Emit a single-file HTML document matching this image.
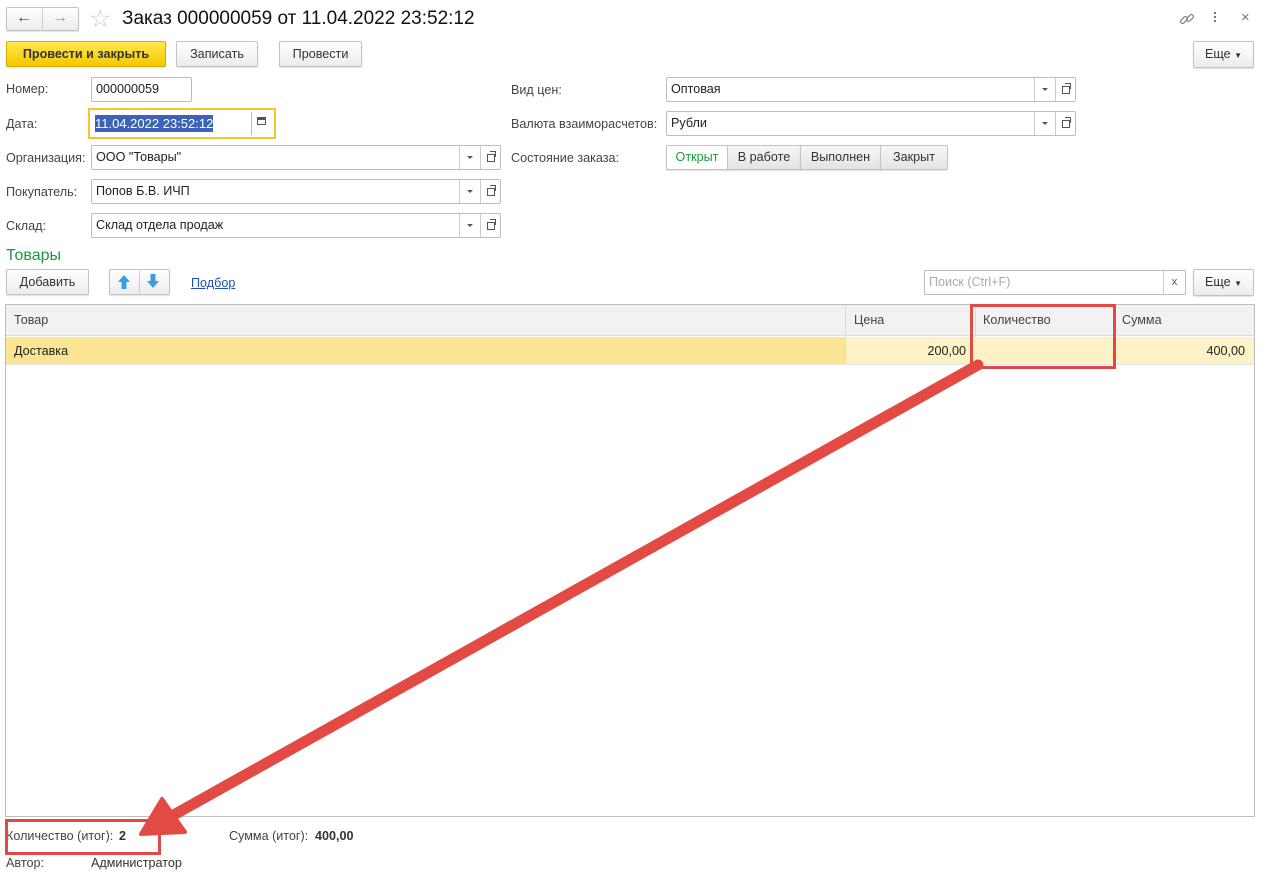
<!DOCTYPE html>
<html><head><meta charset="utf-8"><style>
*{box-sizing:border-box;margin:0;padding:0}
body{width:1271px;height:876px;background:#fff;font-family:"Liberation Sans",Arial,sans-serif;font-size:12.6px;color:#333;position:relative;overflow:hidden}
.a{position:absolute;white-space:nowrap}
.btn{position:absolute;border:1px solid #c3c3c3;border-radius:2px;background:linear-gradient(#fff,#ececec);text-align:center;color:#333;box-shadow:0 1px 1px rgba(0,0,0,.12);white-space:nowrap}
.fld{position:absolute;border:1px solid #bcbcbc;border-radius:2px;background:#fff;padding-left:4px;color:#222;white-space:nowrap}
.lbl{position:absolute;color:#444;white-space:nowrap}
.dd{position:absolute;top:0;bottom:0;width:21px;border-left:1px solid #ccc}
.dd:after{content:"";position:absolute;left:7px;top:10px;border:3px solid transparent;border-top:3px solid #555}
.op{position:absolute;top:0;bottom:0;right:0;width:20px;border-left:1px solid #ccc}
.op:before{content:"";position:absolute;left:6px;top:8px;width:6px;height:6px;border:1px solid #555}
.op:after{content:"";position:absolute;left:9px;top:5px;width:5px;height:5px;border-top:1px solid #555;border-right:1px solid #555}
</style></head><body>
<div class="btn" style="left:6px;top:7px;width:73px;height:24px;"></div>
<div class="a" style="left:42px;top:9px;width:1px;height:20px;background:#ccc"></div>
<div class="a" style="left:16px;top:9px;font-size:16px;color:#444">&#8592;</div>
<div class="a" style="left:52px;top:9px;font-size:16px;color:#999">&#8594;</div>
<div class="a" style="left:89px;top:4px;font-size:25px;color:#ccc">&#9734;</div>
<div class="a" style="left:122px;top:8px;font-size:19px;color:#111">Заказ 000000059 от 11.04.2022 23:52:12</div>
<svg class="a" style="left:1178px;top:10px" width="18" height="18" viewBox="0 0 18 18"><g fill="none" stroke="#888" stroke-width="1.3"><rect x="2" y="8" width="8" height="4" rx="2" transform="rotate(-45 6 10)"/><rect x="8" y="6" width="8" height="4" rx="2" transform="rotate(-45 12 8)"/></g></svg>
<div class="a" style="left:1214px;top:12px;width:2px;height:2px;background:#777;box-shadow:0 4px #777,0 8px #777"></div>
<div class="a" style="left:1241px;top:9px;font-size:15px;color:#777">×</div>
<div class="btn" style="left:6px;top:41px;width:160px;height:26px;line-height:24px;background:linear-gradient(#ffe84d,#f3c800);border-color:#d4ac00;font-weight:bold;color:#333">Провести и закрыть</div>
<div class="btn" style="left:176px;top:41px;width:82px;height:26px;line-height:24px">Записать</div>
<div class="btn" style="left:279px;top:41px;width:83px;height:26px;line-height:24px">Провести</div>
<div class="btn" style="left:1193px;top:41px;width:61px;height:27px;line-height:25px">Еще <span style="font-size:8px">▼</span></div>
<div class="lbl" style="left:6px;top:82px">Номер:</div>
<div class="fld" style="left:91px;top:77px;width:101px;height:25px;line-height:23px">000000059</div>
<div class="lbl" style="left:6px;top:117px">Дата:</div>
<div class="a" style="left:88px;top:108px;width:188px;height:31px;border:2px solid #f5c431"></div>
<div class="a" style="left:95px;top:115px;width:118px;height:17px;background:#3d63b8;color:#fff;line-height:17px;font-size:13px">11.04.2022 23:52:12</div>
<div class="a" style="left:251px;top:112px;width:1px;height:23px;background:#bbb"></div>
<div class="a" style="left:257px;top:117px;width:9px;height:8px;border:1px solid #555;border-top:3px solid #555"></div>
<div class="lbl" style="left:6px;top:151px">Организация:</div>
<div class="fld" style="left:91px;top:145px;width:410px;height:25px;line-height:23px">ООО "Товары"<div class="dd" style="right:20px"></div><div class="op"></div></div>
<div class="lbl" style="left:6px;top:185px">Покупатель:</div>
<div class="fld" style="left:91px;top:179px;width:410px;height:25px;line-height:23px">Попов Б.В. ИЧП<div class="dd" style="right:20px"></div><div class="op"></div></div>
<div class="lbl" style="left:6px;top:219px">Склад:</div>
<div class="fld" style="left:91px;top:213px;width:410px;height:25px;line-height:23px">Склад отдела продаж<div class="dd" style="right:20px"></div><div class="op"></div></div>
<div class="lbl" style="left:511px;top:83px">Вид цен:</div>
<div class="fld" style="left:666px;top:77px;width:410px;height:25px;line-height:23px">Оптовая<div class="dd" style="right:20px"></div><div class="op"></div></div>
<div class="lbl" style="left:511px;top:117px">Валюта взаиморасчетов:</div>
<div class="fld" style="left:666px;top:111px;width:410px;height:25px;line-height:23px">Рубли<div class="dd" style="right:20px"></div><div class="op"></div></div>
<div class="lbl" style="left:511px;top:151px">Состояние заказа:</div>
<div class="btn" style="left:666px;top:145px;width:62px;height:25px;line-height:23px;background:#fff;color:#1a9a3c;border-radius:2px 0 0 2px">Открыт</div>
<div class="btn" style="left:727px;top:145px;width:74px;height:25px;line-height:23px;background:linear-gradient(#f6f6f6,#e4e4e4);border-radius:0">В работе</div>
<div class="btn" style="left:800px;top:145px;width:81px;height:25px;line-height:23px;background:linear-gradient(#f6f6f6,#e4e4e4);border-radius:0">Выполнен</div>
<div class="btn" style="left:880px;top:145px;width:68px;height:25px;line-height:23px;background:linear-gradient(#f6f6f6,#e4e4e4);border-radius:0 2px 2px 0">Закрыт</div>
<div class="a" style="left:6px;top:247px;font-size:16px;color:#1a9a3c">Товары</div>
<div class="btn" style="left:6px;top:269px;width:83px;height:26px;line-height:24px">Добавить</div>
<div class="btn" style="left:109px;top:269px;width:61px;height:26px"></div>
<div class="a" style="left:139px;top:271px;width:1px;height:22px;background:#ccc"></div>
<svg class="a" style="left:117px;top:274px" width="14" height="16"><path d="M7 1 L13 8 H9.5 V15 H4.5 V8 H1 Z" fill="#3a9ee4"/></svg>
<svg class="a" style="left:146px;top:273px" width="14" height="16"><path d="M7 15 L13 8 H9.5 V1 H4.5 V8 H1 Z" fill="#3a9ee4"/></svg>
<div class="a" style="left:191px;top:276px;color:#1f4fb5;text-decoration:underline">Подбор</div>
<div class="fld" style="left:924px;top:270px;width:262px;height:25px;line-height:23px;color:#aaa">Поиск (Ctrl+F)<div class="a" style="right:0;top:0;bottom:0;width:22px;border-left:1px solid #ccc;color:#555;text-align:center;font-size:11px">x</div></div>
<div class="btn" style="left:1193px;top:269px;width:61px;height:27px;line-height:25px">Еще <span style="font-size:8px">▼</span></div>
<div class="a" style="left:5px;top:304px;width:1250px;height:513px;border:1px solid #bdbdbd;background:#fff"></div>
<div class="a" style="left:6px;top:305px;width:1248px;height:31px;background:#f2f2f2;border-bottom:1px solid #ddd"></div>
<div class="a" style="left:845px;top:305px;width:1px;height:59px;background:#ddd"></div>
<div class="a" style="left:975px;top:305px;width:1px;height:59px;background:#ddd"></div>
<div class="a" style="left:1115px;top:305px;width:1px;height:59px;background:#ddd"></div>
<div class="a" style="left:14px;top:313px;color:#444">Товар</div>
<div class="a" style="left:854px;top:313px;color:#444">Цена</div>
<div class="a" style="left:983px;top:313px;color:#444">Количество</div>
<div class="a" style="left:1122px;top:313px;color:#444">Сумма</div>
<div class="a" style="left:6px;top:337px;width:839px;height:27px;background:#fce592"></div>
<div class="a" style="left:846px;top:337px;height:27px;background:#fdf2c5;width:408px"></div>
<div class="a" style="left:6px;top:364px;width:1248px;height:1px;background:#e6e6e6"></div>
<div class="a" style="left:14px;top:344px;color:#222">Доставка</div>
<div class="a" style="left:900px;top:344px;width:66px;text-align:right;color:#222">200,00</div>
<div class="a" style="left:1170px;top:344px;width:75px;text-align:right;color:#222">400,00</div>
<div class="lbl" style="left:6px;top:829px">Количество (итог):</div>
<div class="a" style="left:119px;top:829px;font-weight:bold;color:#333">2</div>
<div class="lbl" style="left:229px;top:829px">Сумма (итог):</div>
<div class="a" style="left:315px;top:829px;font-weight:bold;color:#333">400,00</div>
<div class="lbl" style="left:6px;top:856px">Автор:</div>
<div class="a" style="left:91px;top:856px;color:#333">Администратор</div>
<div class="a" style="left:970px;top:304px;width:146px;height:65px;border:3px solid #e04a46"></div>
<div class="a" style="left:5px;top:819px;width:156px;height:36px;border:3px solid #e04a46"></div>
<svg class="a" style="left:0;top:0" width="1271" height="876"><line x1="978" y1="365" x2="170" y2="817" stroke="#e34a44" stroke-width="11" stroke-linecap="round"/><path d="M141 834 L162 799 L185 832 Z" fill="#e34a44" stroke="#e34a44" stroke-width="4" stroke-linejoin="round"/></svg>
</body></html>
